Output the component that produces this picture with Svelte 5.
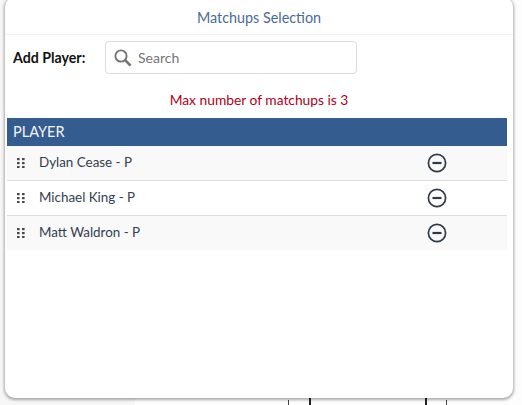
<script>
  const players = ['Dylan Cease - P', 'Michael King - P', 'Matt Waldron - P'];
</script>

<div class="page">
  <div class="behind">
    <i class="tick thin t1"></i>
    <i class="tick t2"></i>
    <i class="tick t3"></i>
    <i class="tick thin t4"></i>
  </div>
  <div class="modal">
    <header>Matchups Selection</header>
    <div class="add">
      <span class="label">Add Player:</span>
      <div class="search">
        <svg width="20" height="20" viewBox="0 0 20 20" fill="none" stroke="#757575">
          <circle cx="8" cy="8" r="5.6" stroke-width="1.9" />
          <path d="M12 12l5.6 5.6" stroke-width="2.6" />
        </svg>
        <span class="ph">Search</span>
      </div>
    </div>
    <p class="err">Max number of matchups is 3</p>
    <div class="table">
      <div class="head">PLAYER</div>
      {#each players as p}
        <div class="row">
          <svg class="grip" width="8" height="10" viewBox="0 0 8 10" fill="#4a4a4a">
            {#each [0, 4, 8] as y}
              <rect x="0" {y} width="2.6" height="2.2" />
              <rect x="5" {y} width="2.6" height="2.2" />
            {/each}
          </svg>
          <span class="name">{p}</span>
          <svg class="minus" width="20" height="20" viewBox="0 0 20 20" fill="none" stroke="#2f3a48">
            <circle cx="10" cy="10" r="8.6" stroke-width="1.7" />
            <path d="M5.5 10h9" stroke-width="2.2" />
          </svg>
        </div>
      {/each}
    </div>
  </div>
</div>

<style>
  :global(body) {
    margin: 0;
    background: #fafafa;
  }
  .page {
    position: relative;
    width: 522px;
    height: 405px;
    overflow: hidden;
    font-family: Lato, sans-serif;
  }
  .behind {
    position: absolute;
    inset: 0;
    background: linear-gradient(to right, #f7f7f7 135px, #fdfdfd 135px);
  }
  .tick {
    position: absolute;
    bottom: 0;
    height: 8px;
    width: 2px;
    background: #222;
  }
  .tick.thin {
    width: 1px;
    height: 5px;
    background: #444;
  }
  .t1 { left: 288px; }
  .t2 { left: 309px; }
  .t3 { left: 425px; }
  .t4 { left: 446px; }
  .modal {
    position: absolute;
    left: 5px;
    top: -3px;
    width: 508px;
    height: 401px;
    box-sizing: border-box;
    padding-top: 3px;
    background: #fff;
    border-radius: 10px;
    box-shadow: 0 1px 3px 1px rgba(0, 0, 0, 0.32);
  }
  header {
    height: 34px;
    line-height: 36px;
    text-align: center;
    font-size: 14.35px;
    color: #4a6a96;
    border-bottom: 1px solid #f2f2f2;
  }
  .add {
    display: flex;
    align-items: center;
    height: 33px;
    margin-top: 6px;
    padding-left: 8px;
  }
  .label {
    width: 92px;
    font-size: 14.2px;
    font-weight: 700;
    color: #111;
  }
  .search {
    display: flex;
    align-items: center;
    gap: 5px;
    width: 252px;
    height: 33px;
    box-sizing: border-box;
    padding-left: 7px;
    border: 1px solid #dcdcdc;
    border-radius: 4px;
  }
  .ph {
    font-size: 14px;
    color: #757575;
  }
  .err {
    margin: 17px 0 0;
    text-align: center;
    font-size: 13.8px;
    line-height: 17px;
    color: #b00020;
  }
  .table {
    margin: 10px 6px 0 2px;
  }
  .head {
    height: 28px;
    line-height: 28px;
    padding-left: 6px;
    background: #355c8f;
    color: #f4f4f4;
    font-size: 14.5px;
  }
  .row {
    display: flex;
    align-items: center;
    height: 34px;
    background: #fff;
    border-bottom: 1px solid #dedede;
    color: #33404f;
    font-size: 13.4px;
    line-height: 32px;
  }
  .row:nth-child(even) {
    background: #f9f9f9;
  }
  .row:last-child {
    border-bottom: 0;
  }
  .grip {
    margin-left: 10px;
  }
  .name {
    width: 389px;
    margin-left: 14px;
    margin-top: -2px;
  }
  .minus {
    margin-top: -1px;
    margin-left: -1px;
  }
</style>
